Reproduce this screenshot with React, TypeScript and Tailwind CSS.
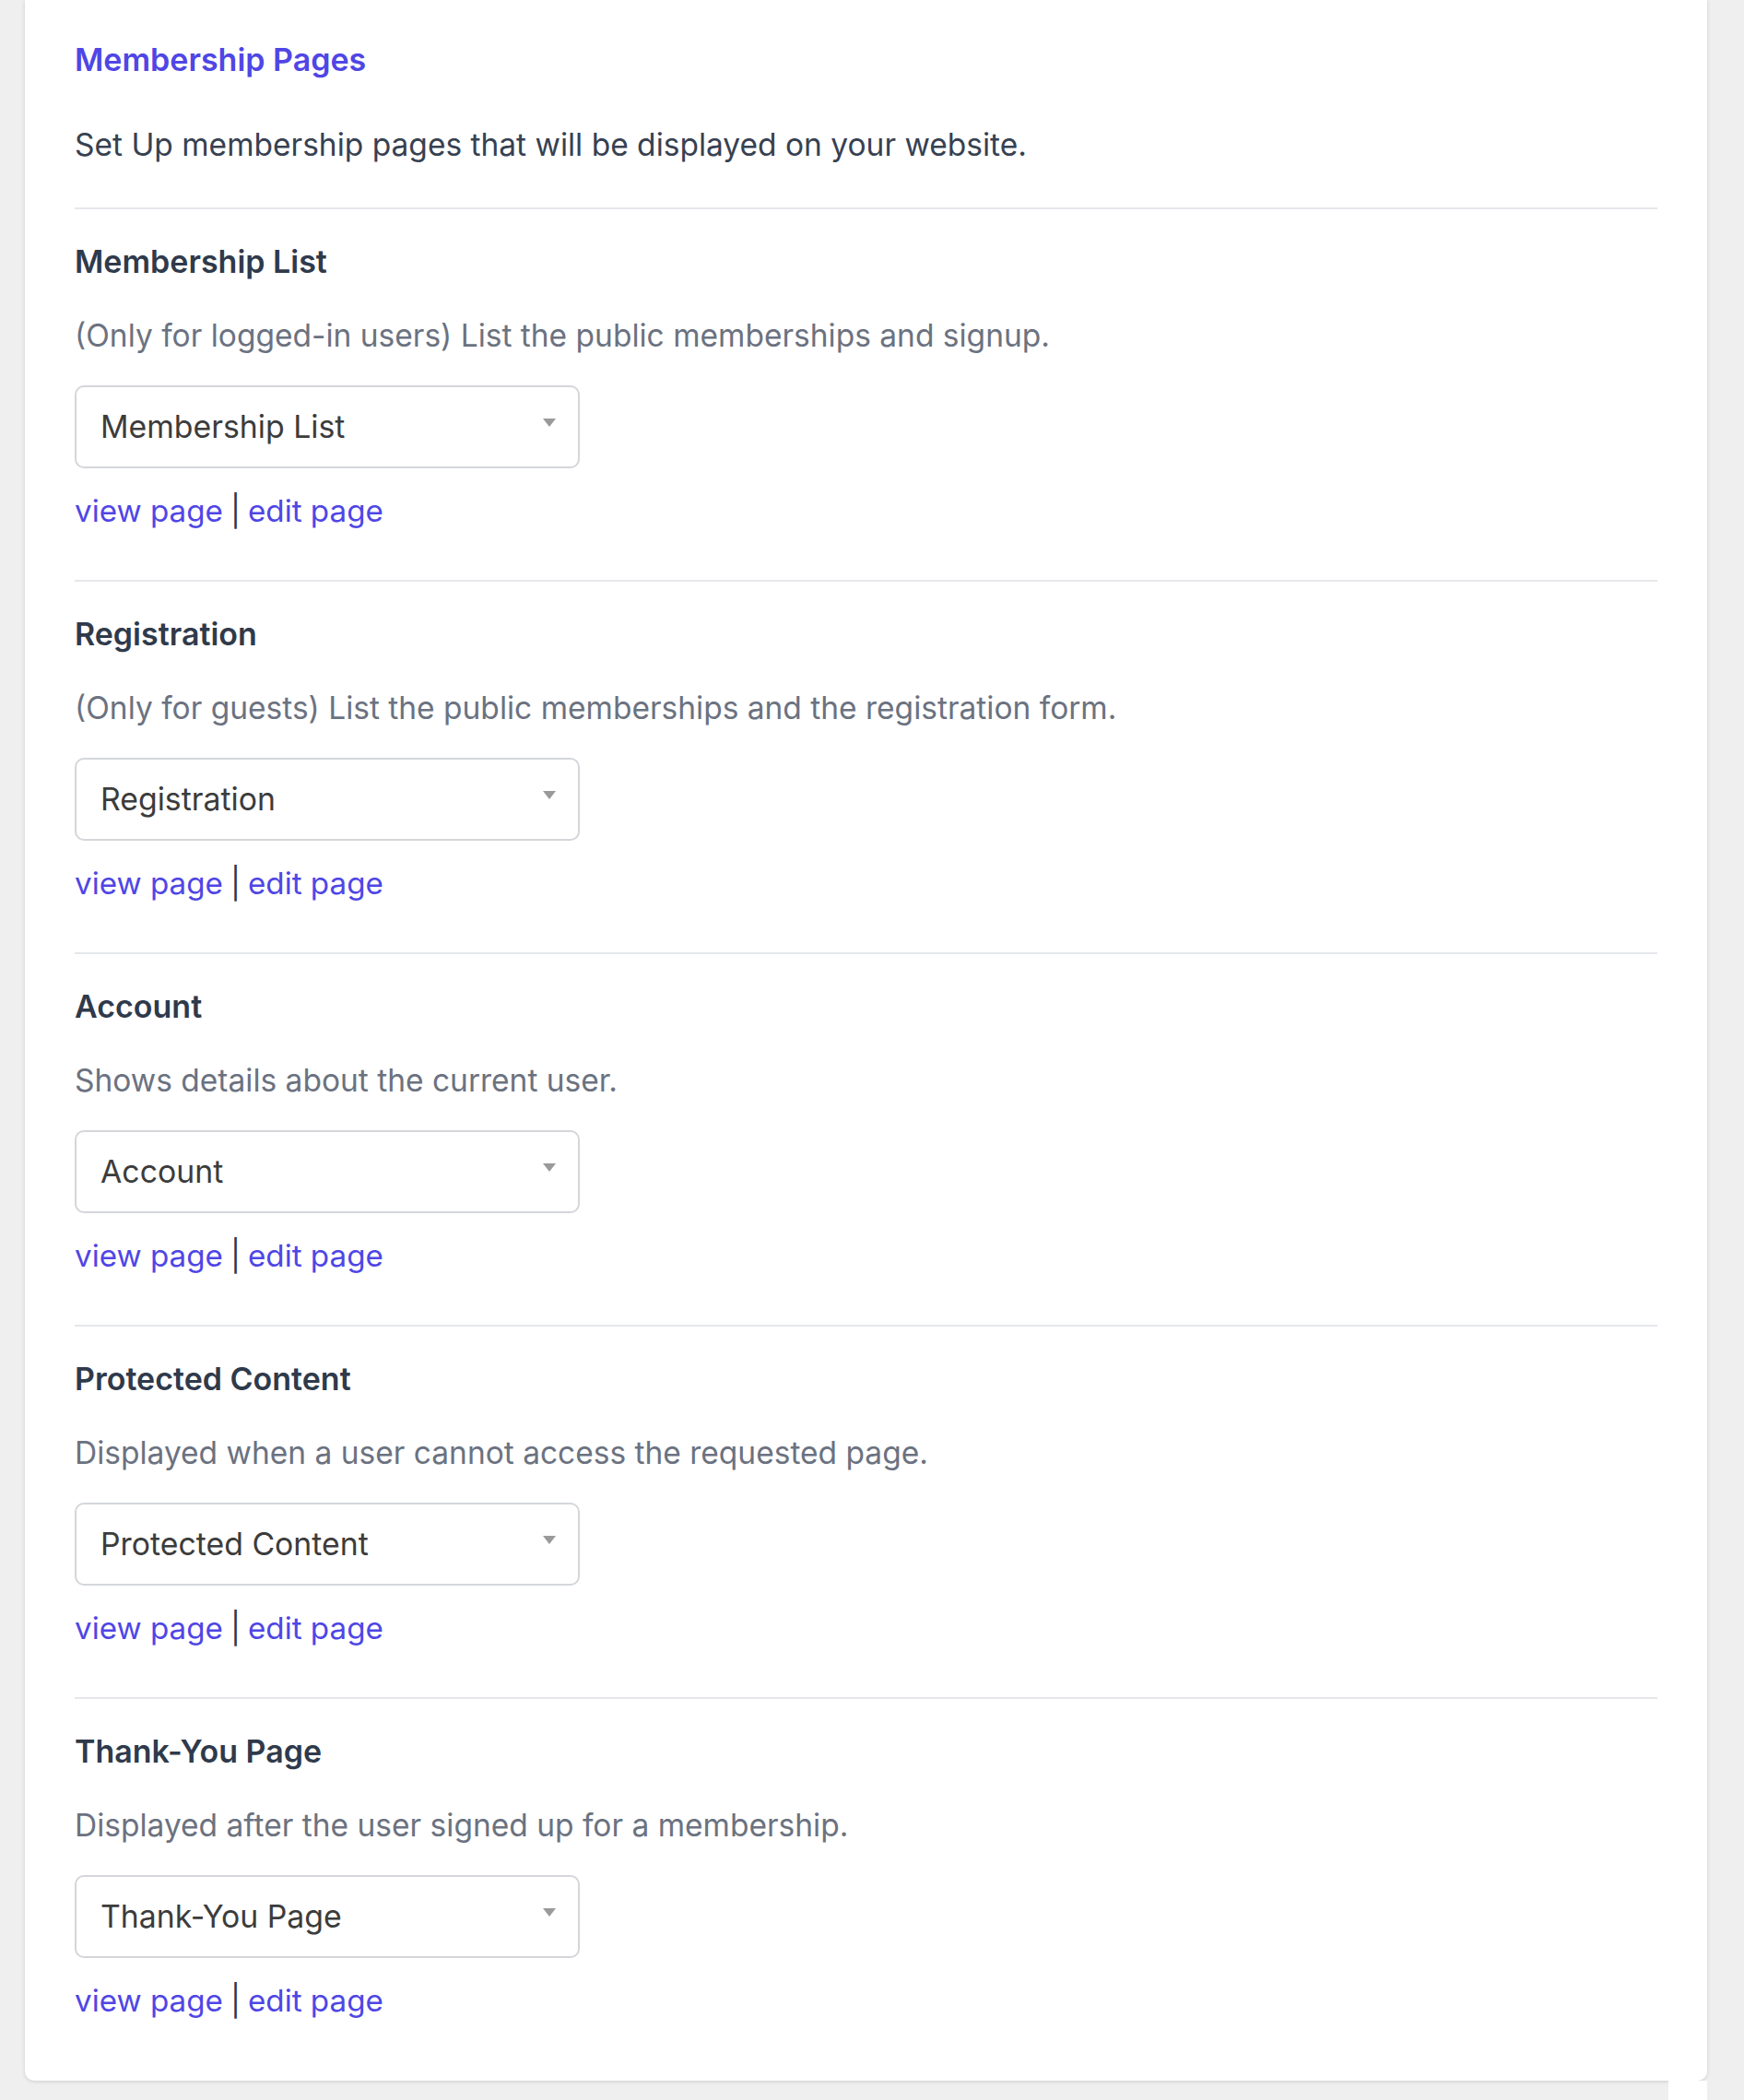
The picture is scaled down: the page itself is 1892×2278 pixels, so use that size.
import React from "react"

type PageSetting = {
  title: string
  description: string
  selected: string
}

const pages: PageSetting[] = [
  {
    title: "Membership List",
    description: "(Only for logged-in users) List the public memberships and signup.",
    selected: "Membership List",
  },
  {
    title: "Registration",
    description: "(Only for guests) List the public memberships and the registration form.",
    selected: "Registration",
  },
  {
    title: "Account",
    description: "Shows details about the current user.",
    selected: "Account",
  },
  {
    title: "Protected Content",
    description: "Displayed when a user cannot access the requested page.",
    selected: "Protected Content",
  },
  {
    title: "Thank-You Page",
    description: "Displayed after the user signed up for a membership.",
    selected: "Thank-You Page",
  },
]

function PageSelect({ value }: { value: string }) {
  return (
    <div className="flex h-[90px] w-[548px] items-center justify-between rounded-[10px] border-2 border-[#d4d6da] bg-white pl-[26px] pr-[24px]">
      <span className="text-[33.8px] leading-[48px] text-[#3c3c3c]">{value}</span>
      {/* caret */}
      <svg width="14" height="9" viewBox="0 0 14 9" className="-mt-[10px]">
        <path d="M0 0 L14 0 L7 9 Z" fill="#9a9a9a" />
      </svg>
    </div>
  )
}

function PageSection({ page, last }: { page: PageSetting; last: boolean }) {
  return (
    <div className={last ? "pb-[63px]" : "pb-[51px]"}>
      <div className="h-[2px] bg-[#e5e7eb]" />
      <h3 className="mt-[33px] text-[34px] font-semibold leading-[48px] text-[#2f3a4b]">{page.title}</h3>
      <p className="mt-[32px] text-[33.5px] leading-[48px] text-[#6b7280]">{page.description}</p>
      <div className="mt-[30px]">
        <PageSelect value={page.selected} />
      </div>
      <div className="mt-[22px] text-[33.2px] leading-[48px] text-[#2f3a4b]">
        <a href="#" className="text-[#4f46e5]">view page</a>
        <span className="mx-[8px]">|</span>
        <a href="#" className="text-[#4f46e5]">edit page</a>
      </div>
    </div>
  )
}

export default function App() {
  return (
    <div
      className="min-h-[2278px] bg-[#efefef]"
      style={{ fontFamily: "Inter, 'Noto Sans', sans-serif" }}
    >
      <div className="ml-[27px] mr-[40px] rounded-b-[10px] bg-white px-[54px] shadow-[0_1px_4px_rgba(0,0,0,0.14)]">
        {/* Header */}
        <h2 className="pt-[41px] text-[34px] font-semibold leading-[48px] text-[#4f46e5]">Membership Pages</h2>
        <p className="mt-[44px] pb-[44px] text-[33.5px] leading-[48px] text-[#374151]">
          Set Up membership pages that will be displayed on your website.
        </p>

        {pages.map((page, i) => (
          <PageSection key={page.title} page={page} last={i === pages.length - 1} />
        ))}
      </div>
      <div className="flex justify-end pr-[40px]">
        <div className="h-[21px] w-[42px] bg-white" />
      </div>
    </div>
  )
}
